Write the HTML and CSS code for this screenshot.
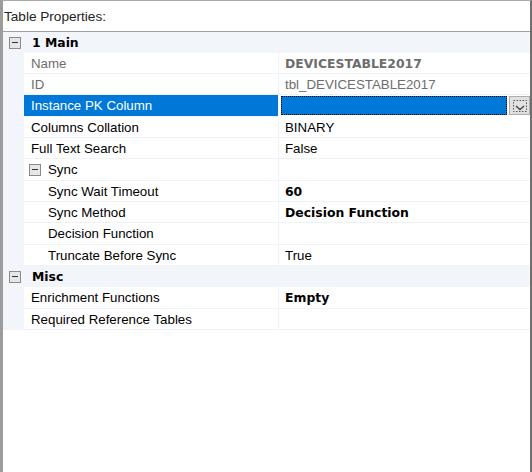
FILE: index.html
```html
<!DOCTYPE html>
<html>
<head>
<meta charset="utf-8">
<link rel="stylesheet" href="styles.css">
</head>
<body>
<div class="panel">
  <div class="title">Table Properties:</div>
  <div class="grid">
    <div class="row cat">
      <div class="gutter"><span class="exp"></span></div>
      <div class="catname">1 Main</div>
    </div>
    <div class="row">
      <div class="gutter"></div>
      <div class="name ro">Name</div>
      <div class="value ro bold">DEVICESTABLE2017</div>
    </div>
    <div class="row">
      <div class="gutter"></div>
      <div class="name ro">ID</div>
      <div class="value ro">tbl_DEVICESTABLE2017</div>
    </div>
    <div class="row tall sel">
      <div class="gutter"></div>
      <div class="name">Instance PK Column</div>
      <div class="value edit">
        <div class="focus"></div>
        <div class="btn">
          <svg width="16" height="14" viewBox="0 0 16 14">
            <rect x="1.5" y="1.5" width="13" height="11" fill="none" stroke="#555" stroke-width="1" stroke-dasharray="1.5 1.5"/>
            <path d="M4 7 L8 10.5 L12 7" fill="none" stroke="#444" stroke-width="1.4"/>
          </svg>
        </div>
      </div>
    </div>
    <div class="row">
      <div class="gutter"></div>
      <div class="name">Columns Collation</div>
      <div class="value">BINARY</div>
    </div>
    <div class="row">
      <div class="gutter"></div>
      <div class="name">Full Text Search</div>
      <div class="value">False</div>
    </div>
    <div class="row tall">
      <div class="gutter"></div>
      <div class="name sub"><span class="exp small"></span>Sync</div>
      <div class="value"></div>
    </div>
    <div class="row">
      <div class="gutter"></div>
      <div class="name ind">Sync Wait Timeout</div>
      <div class="value bold">60</div>
    </div>
    <div class="row">
      <div class="gutter"></div>
      <div class="name ind">Sync Method</div>
      <div class="value bold">Decision Function</div>
    </div>
    <div class="row tall">
      <div class="gutter"></div>
      <div class="name ind">Decision Function</div>
      <div class="value"></div>
    </div>
    <div class="row">
      <div class="gutter"></div>
      <div class="name ind">Truncate Before Sync</div>
      <div class="value">True</div>
    </div>
    <div class="row cat">
      <div class="gutter"><span class="exp"></span></div>
      <div class="catname">Misc</div>
    </div>
    <div class="row tall">
      <div class="gutter"></div>
      <div class="name">Enrichment Functions</div>
      <div class="value bold">Empty</div>
    </div>
    <div class="row">
      <div class="gutter"></div>
      <div class="name">Required Reference Tables</div>
      <div class="value"></div>
    </div>
  </div>
</div>
</body>
</html>
```

FILE: styles.css
```css
html, body {
  margin: 0;
  padding: 0;
  background: #ffffff;
}

.panel {
  width: 527px;
  height: 471px;
  border-top: 1px solid #a9a9a9;
  border-left: 3px solid #9c9c9c;
  border-right: 2px solid #6f6f6f;
  font-family: "Liberation Sans", Arial, sans-serif;
  font-size: 13.3px;
  color: #000;
  display: flex;
  flex-direction: column;
  overflow: hidden;
}

.title {
  height: 30px;
  padding-left: 1px;
  display: flex;
  align-items: center;
  color: #222;
  font-size: 13.6px;
}

.grid {
  border-top: 1px solid #a0a0a0;
  display: flex;
  flex-direction: column;
}

.row {
  display: grid;
  grid-template-columns: 21px 255px 1fr;
  height: 21px;
}

.row.tall {
  height: 22px;
}

.gutter {
  background: #f2f5fa;
  display: flex;
  align-items: center;
  justify-content: center;
}

.name, .value {
  border-bottom: 1px solid #eff2f7;
  display: flex;
  align-items: center;
  white-space: nowrap;
  overflow: hidden;
}

.name {
  border-right: 1px solid #eff2f7;
  padding-left: 7px;
}

.value {
  padding-left: 6px;
}

.ro {
  color: #6d6d6d;
}

.bold {
  font-family: "DejaVu Sans", sans-serif;
  font-weight: bold;
  font-size: 12.4px;
}

.ind {
  padding-left: 24px;
}

.sub {
  padding-left: 5px;
}

.cat {
  background: #f2f5fa;
  grid-template-columns: 21px 1fr;
}

.catname {
  font-family: "DejaVu Sans", sans-serif;
  font-weight: bold;
  font-size: 12.4px;
  display: flex;
  align-items: center;
  padding-left: 8px;
}

.exp {
  width: 10px;
  height: 10px;
  border: 1px solid #8a8a8a;
  background: #e6e6e6;
  position: relative;
  margin-left: 3px;
}

.exp::after {
  content: "";
  position: absolute;
  left: 2px;
  top: 4px;
  width: 6px;
  height: 1px;
  background: #333;
}

.exp.small {
  margin-left: 0;
  margin-right: 7px;
}

.sel .name {
  background: #0078d7;
  color: #fff;
  border-right-color: #fff;
}

.value.edit {
  padding: 1px 0 1px 2px;
  gap: 2px;
  align-items: stretch;
  border-bottom-color: #fff;
}

.focus {
  flex: 1;
  background: #0078d7;
  border: 1px dotted #000;
}

.btn {
  width: 19px;
  background: #e1e1e1;
  border: 1px solid #adadad;
  display: flex;
  align-items: center;
  justify-content: center;
}
```
